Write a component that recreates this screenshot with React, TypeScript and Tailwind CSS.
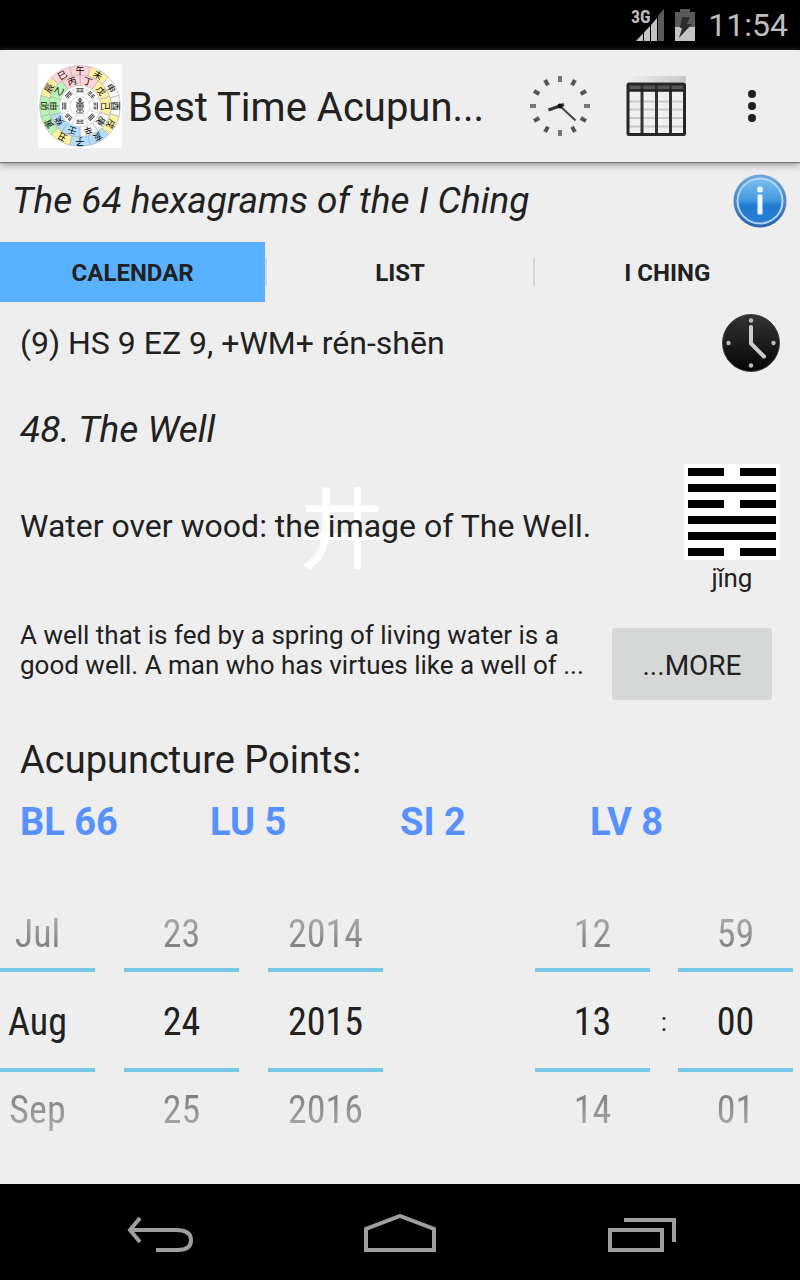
import { useState } from "react";

const PINK = "#ffd3d8";
const YELLOW = "#fdf0a0";
const GREEN = "#b9f5b4";
const BLUE = "#b3defd";
const WHITE = "#f8f8f8";

const branches = [
  ["午", PINK],
  ["未", YELLOW],
  ["申", WHITE],
  ["酉", WHITE],
  ["戌", YELLOW],
  ["亥", BLUE],
  ["子", BLUE],
  ["丑", YELLOW],
  ["寅", GREEN],
  ["卯", GREEN],
  ["辰", YELLOW],
  ["巳", PINK],
];

const stems = [
  ["丁", PINK],
  ["戊", YELLOW],
  ["己", YELLOW],
  ["庚", WHITE],
  ["辛", WHITE],
  ["壬", BLUE],
  ["癸", BLUE],
  ["甲", GREEN],
  ["乙", GREEN],
  ["丙", PINK],
];

// broken lines of the eight trigrams, clockwise from the top
const trigrams = [
  [0, 1, 0],
  [1, 1, 1],
  [0, 1, 1],
  [0, 0, 0],
  [1, 0, 1],
  [1, 1, 0],
  [1, 0, 0],
  [0, 0, 1],
];

function sector(angle: number, span: number, inner: number, outer: number) {
  const point = (deg: number, r: number) => {
    const rad = ((deg - 90) * Math.PI) / 180;
    return `${42 + Math.cos(rad) * r} ${42 + Math.sin(rad) * r}`;
  };
  const a = angle - span / 2;
  const b = angle + span / 2;
  return `M${point(a, inner)}L${point(a, outer)}A${outer} ${outer} 0 0 1 ${point(b, outer)}L${point(b, inner)}A${inner} ${inner} 0 0 0 ${point(a, inner)}Z`;
}

function CompassLogo() {
  return (
    <svg className="size-[84px] shrink-0 bg-white font-['Noto_Sans_CJK_SC',sans-serif]" viewBox="0 0 84 84" aria-hidden="true">
      {branches.map(([char, fill], i) => (
        <g key={char}>
          <path d={sector(i * 30, 30, 31, 40.5)} fill={fill} stroke="#a9a9a9" strokeWidth=".6" />
          <text x="42" y="9.6" fontSize="9" textAnchor="middle" transform={`rotate(${i * 30} 42 42)`}>
            {char}
          </text>
        </g>
      ))}
      {stems.map(([char, fill], i) => (
        <g key={char}>
          <path d={sector(i * 36 + 18, 36, 20.5, 31)} fill={fill} stroke="#a9a9a9" strokeWidth=".6" />
          <text x="42" y="19.6" fontSize="9" textAnchor="middle" transform={`rotate(${i * 36 + 18} 42 42)`}>
            {char}
          </text>
        </g>
      ))}
      {trigrams.map((lines, i) => (
        <g key={i} transform={`rotate(${i * 45} 42 42)`}>
          <path d={sector(0, 45, 10, 20.5)} fill="#fff" stroke="#ccc" strokeWidth=".6" />
          {lines.map((broken, n) => (
            <path
              key={n}
              d={broken ? `M38.5 ${24.6 + n * 1.6}h3M42.5 ${24.6 + n * 1.6}h3` : `M38.5 ${24.6 + n * 1.6}h7`}
              stroke="#444"
              strokeWidth="1"
            />
          ))}
        </g>
      ))}
      <g fill="none" stroke="#555" strokeWidth="1">
        <ellipse cx="42" cy="42" rx="3.2" ry="4.2" fill="#bbb" />
        <path d="M42 34.5v14M38 38l3 2M46 38l-3 2M38 48l2-2.5M46 48l-2-2.5M39 42h6M38.5 49h7" />
        <circle cx="42" cy="35.8" r="1.4" fill="#888" />
      </g>
    </svg>
  );
}

function DialIcon() {
  return (
    <svg className="size-[60px]" viewBox="0 0 60 60" aria-hidden="true">
      {Array.from({ length: 12 }).map((_, i) => (
        <path key={i} d="M30 0v6" stroke={i % 3 === 0 ? "#777" : "#555"} strokeWidth="4" transform={`rotate(${i * 30} 30 30)`} />
      ))}
      <path d="M30 30l15.500 14.500" stroke="#444" strokeWidth="2" />
      <path d="M18.500 34L34 28.500" stroke="#333" strokeWidth="3" />
      <circle cx="30" cy="30" r="2.500" fill="#111" />
    </svg>
  );
}

function TableIcon() {
  return (
    <svg className="size-[60px]" viewBox="0 0 60 60" aria-hidden="true">
      <defs>
        <linearGradient id="sheen">
          <stop offset="0" stopColor="#eee" />
          <stop offset="1" stopColor="#c8c8c8" />
        </linearGradient>
      </defs>
      <path d="M1 0h59v6H1z" fill="url(#sheen)" />
      <rect x="2" y="8" width="57" height="51" rx="1" fill="#efefef" />
      <path d="M3 25.500h55M3 33.500h55M3 42h55M3 50.500h55" stroke="#c9c9c9" strokeWidth="2" />
      <path d="M2 8h57v7H2z" fill="#555" />
      <path d="M16 7v52M30.500 7v52M44.500 7v52" stroke="#333" strokeWidth="3" />
      <path d="M1 14.500h58" stroke="#222" strokeWidth="2.500" />
      <rect x="2" y="8" width="56.500" height="50.500" rx="1" fill="none" stroke="#262626" strokeWidth="3" />
    </svg>
  );
}

function InfoIcon() {
  return (
    <svg className="size-[54px]" viewBox="0 0 54 54" aria-hidden="true">
      <defs>
        <linearGradient id="info" x2="0" y2="1">
          <stop offset="0" stopColor="#7dbdf0" />
          <stop offset=".45" stopColor="#4a9ce2" />
          <stop offset=".6" stopColor="#1f7bd0" />
          <stop offset="1" stopColor="#2a80d4" />
        </linearGradient>
        <linearGradient id="info-rim" x2="0" y2="1">
          <stop offset="0" stopColor="#6ba8e0" />
          <stop offset="1" stopColor="#2a62ae" />
        </linearGradient>
      </defs>
      <circle cx="27" cy="27" r="26.500" fill="url(#info-rim)" />
      <circle cx="27" cy="27" r="22.500" fill="url(#info)" stroke="#b5d6f4" strokeWidth="2" />
      <circle cx="27" cy="15.500" r="3" fill="#eef6fd" />
      <rect x="24.500" y="20.500" width="5" height="20" rx="1" fill="#eef6fd" />
    </svg>
  );
}

function NowIcon() {
  return (
    <svg className="size-[58px]" viewBox="0 0 58 58" aria-hidden="true">
      <defs>
        <linearGradient id="now" x2="0" y2="1">
          <stop offset="0" stopColor="#333" />
          <stop offset="1" stopColor="#050505" />
        </linearGradient>
      </defs>
      <circle cx="29" cy="29" r="28.500" fill="url(#now)" stroke="#444" />
      <g fill="#bbb">
        <circle cx="29" cy="6.500" r="2.200" />
        <circle cx="29" cy="51.500" r="2.200" />
        <circle cx="6.500" cy="29" r="2.200" />
        <circle cx="51.500" cy="29" r="2.200" />
      </g>
      <path d="M29 13v16.500l13 13" fill="none" stroke="#ccc" strokeWidth="4" strokeLinecap="round" strokeLinejoin="round" />
    </svg>
  );
}

function Hexagram() {
  return (
    <svg className="size-24 bg-white" viewBox="0 0 96 96" role="img" aria-label="Hexagram 48">
      <path
        d="M4 8h36M56 8h36M4 24h88M4 40h36M56 40h36M4 56h88M4 72h88M4 88h36M56 88h36"
        stroke="#000"
        strokeWidth="8"
      />
    </svg>
  );
}

function StatusBar() {
  return (
    <div className="flex h-[50px] items-center justify-end bg-black pr-3 text-[#bebebe]">
      <svg className="mr-2.5 h-10 w-[34px]" viewBox="0 0 34 40" aria-hidden="true">
        <path d="M28 10.500L34 4v32h-6z" fill="#5a5a5a" />
        <path d="M6 36l7-7.500V36zM14 27.500l6-6.500v15h-6zM21 20l6-7v23h-6z" fill="#c4c4c4" />
        <text x="1" y="18" fontSize="18" fontWeight="700" fill="#bebebe" className="font-['Roboto_Condensed','Roboto',sans-serif]">
          3G
        </text>
      </svg>
      <svg className="mr-3 h-8 w-[22px]" viewBox="0 0 22 32" aria-hidden="true">
        <path d="M6 0h10v3h5v15H1V3h5z" fill="#5a5a5a" />
        <path d="M1 18h20v14H1z" fill="#c4c4c4" />
        <path d="M8 8h8l-3 7h5L5 29l3-10H6z" fill="#2c2c2c" />
      </svg>
      <span className="text-[32px] leading-10">11:54</span>
    </div>
  );
}

function ActionBar() {
  return (
    <header className="relative z-10 flex h-28 items-center bg-[#eee] pl-[38px] shadow-[0_1px_1px_#777,0_3px_7px_#999]">
      <CompassLogo />
      <h1 className="min-w-0 flex-1 truncate pt-1 pl-1.5 text-[40px] leading-12">Best Time Acupun...</h1>
      <div className="flex shrink-0">
        <button type="button" aria-label="Clock" className="grid h-28 w-24 place-items-center">
          <DialIcon />
        </button>
        <button type="button" aria-label="Table" className="grid h-28 w-24 place-items-center">
          <TableIcon />
        </button>
        <button type="button" aria-label="More options" className="grid h-28 w-24 place-items-center">
          <svg className="h-8 w-2" viewBox="0 0 8 32" fill="#222" aria-hidden="true">
            <circle cx="4" cy="4" r="4" />
            <circle cx="4" cy="16" r="4" />
            <circle cx="4" cy="28" r="4" />
          </svg>
        </button>
      </div>
    </header>
  );
}

function Tabs() {
  const [active, setActive] = useState("CALENDAR");

  return (
    <div
      role="tablist"
      className="grid h-[60px] grid-cols-[1fr_2px_1fr_2px_1fr] items-center"
    >
      {["CALENDAR", "LIST", "I CHING"].map((tab, i) => (
        <div key={tab} role="presentation" className="contents">
          {i > 0 && <span className="h-7 bg-[#d6d6d6]" />}
          <button
            type="button"
            role="tab"
            aria-selected={active === tab}
            onClick={() => setActive(tab)}
            className={`h-full pt-0.5 text-2xl font-bold ${active === tab ? "bg-[#5ab2ff]" : ""}`}
          >
            {tab}
          </button>
        </div>
      ))}
    </div>
  );
}

interface PickerProps {
  label: string;
  values: [string, string, string];
}

function Picker({ label, values: [prev, current, next] }: PickerProps) {
  return (
    <div className="flex w-[115px] flex-col text-center font-['Roboto_Condensed','Roboto',sans-serif] text-[38px] leading-12">
      <button type="button" className="h-[68px] bg-linear-to-b from-[#c4c4c4] to-[#666] bg-clip-text text-transparent">
        {prev}
      </button>
      <input
        aria-label={label}
        defaultValue={current}
        className="h-[104px] w-full border-y-4 border-[#76c7e6] bg-transparent pt-1 text-center outline-none"
      />
      <button type="button" className="h-[76px] bg-linear-to-b from-[#666] to-[#c4c4c4] bg-clip-text text-transparent">
        {next}
      </button>
    </div>
  );
}

function NavBar() {
  return (
    <nav className="mt-auto grid h-24 grid-cols-3 bg-black px-10 pt-2 text-[#9f9f9f]">
      <button type="button" aria-label="Back" className="grid place-items-center">
        <svg className="h-11 w-[68px]" viewBox="0 0 68 44" fill="none" stroke="currentColor" strokeWidth="4" aria-hidden="true">
          <path d="M14 4L4 16l10 12M4 16h46c10 0 15 3 15 10s-5 10-13 10H30" />
        </svg>
      </button>
      <button type="button" aria-label="Home" className="grid place-items-center">
        <svg className="h-11 w-[72px]" viewBox="0 0 72 44" fill="none" stroke="currentColor" strokeWidth="4" aria-hidden="true">
          <path d="M2 36V15L36 2l34 13v21z" />
        </svg>
      </button>
      <button type="button" aria-label="Recent apps" className="grid place-items-center">
        <svg className="h-11 w-[72px]" viewBox="0 0 72 44" fill="none" stroke="currentColor" strokeWidth="4" aria-hidden="true">
          <path d="M6 16h52v20H6zM20 6h50v22" />
        </svg>
      </button>
    </nav>
  );
}

export default function App() {
  return (
    <div className="flex min-h-screen flex-col overflow-x-hidden bg-[#eee] font-['Roboto',sans-serif] text-[#212121]">
      <StatusBar />
      <ActionBar />

      <main>
        <div className="flex h-20 items-center justify-between pb-0.5 pl-3 pr-[13px]">
          <h2 className="text-[37px] leading-12 italic">The 64 hexagrams of the I Ching</h2>
          <button type="button" aria-label="Info">
            <InfoIcon />
          </button>
        </div>

        <Tabs />

        <div className="flex h-[82px] items-center justify-between px-5">
          <p className="text-[32px] leading-10">(9) HS 9 EZ 9, +WM+ rén-shēn</p>
          <button type="button" aria-label="Now">
            <NowIcon />
          </button>
        </div>

        <h3 className="flex h-20 items-center px-5 pt-3 text-[37px] leading-12 italic">48. The Well</h3>

        <div className="flex items-center justify-between px-5">
          <div className="relative mb-2">
            <span className="absolute inset-0 flex items-center justify-center pb-1.5 pl-[72px] font-['Noto_Sans_CJK_SC',sans-serif] text-[88px] text-white" lang="zh">
              井
            </span>
            <p className="relative text-[32px] leading-10">Water over wood: the image of The Well.</p>
          </div>
          <div className="flex flex-col items-center">
            <Hexagram />
            <span className="text-[26px] leading-9">jǐng</span>
          </div>
        </div>

        <div className="mt-6 flex items-start pl-5 pr-7">
          <p className="flex-1 pr-2 text-[26px] leading-[30px]">
            A well that is fed by a spring of living water is a good well. A man who has virtues like a well of ...
          </p>
          <button type="button" className="mt-2 h-[72px] w-40 shrink-0 rounded bg-[#d6d7d7] pt-1 text-[28px]">
            ...MORE
          </button>
        </div>

        <h3 className="mt-9 px-5 text-[38px] leading-12">Acupuncture Points:</h3>
        <div className="mt-3.5 grid grid-cols-4 px-5 text-[38px] leading-12 font-bold text-[#5691ff]">
          <a href="#bl66">BL 66</a>
          <a href="#lu5">LU 5</a>
          <a href="#si2">SI 2</a>
          <a href="#lv8">LV 8</a>
        </div>

        <div className="mt-[54px] flex justify-between pr-[7px]">
          <div className="-ml-5 flex gap-[29px]">
            <Picker label="Month" values={["Jul", "Aug", "Sep"]} />
            <Picker label="Day" values={["23", "24", "25"]} />
            <Picker label="Year" values={["2014", "2015", "2016"]} />
          </div>
          <div className="flex items-center">
            <Picker label="Hour" values={["12", "13", "14"]} />
            <span className="w-7 pb-1 text-center text-[26px]">:</span>
            <Picker label="Minute" values={["59", "00", "01"]} />
          </div>
        </div>
      </main>

      <NavBar />
    </div>
  );
}
